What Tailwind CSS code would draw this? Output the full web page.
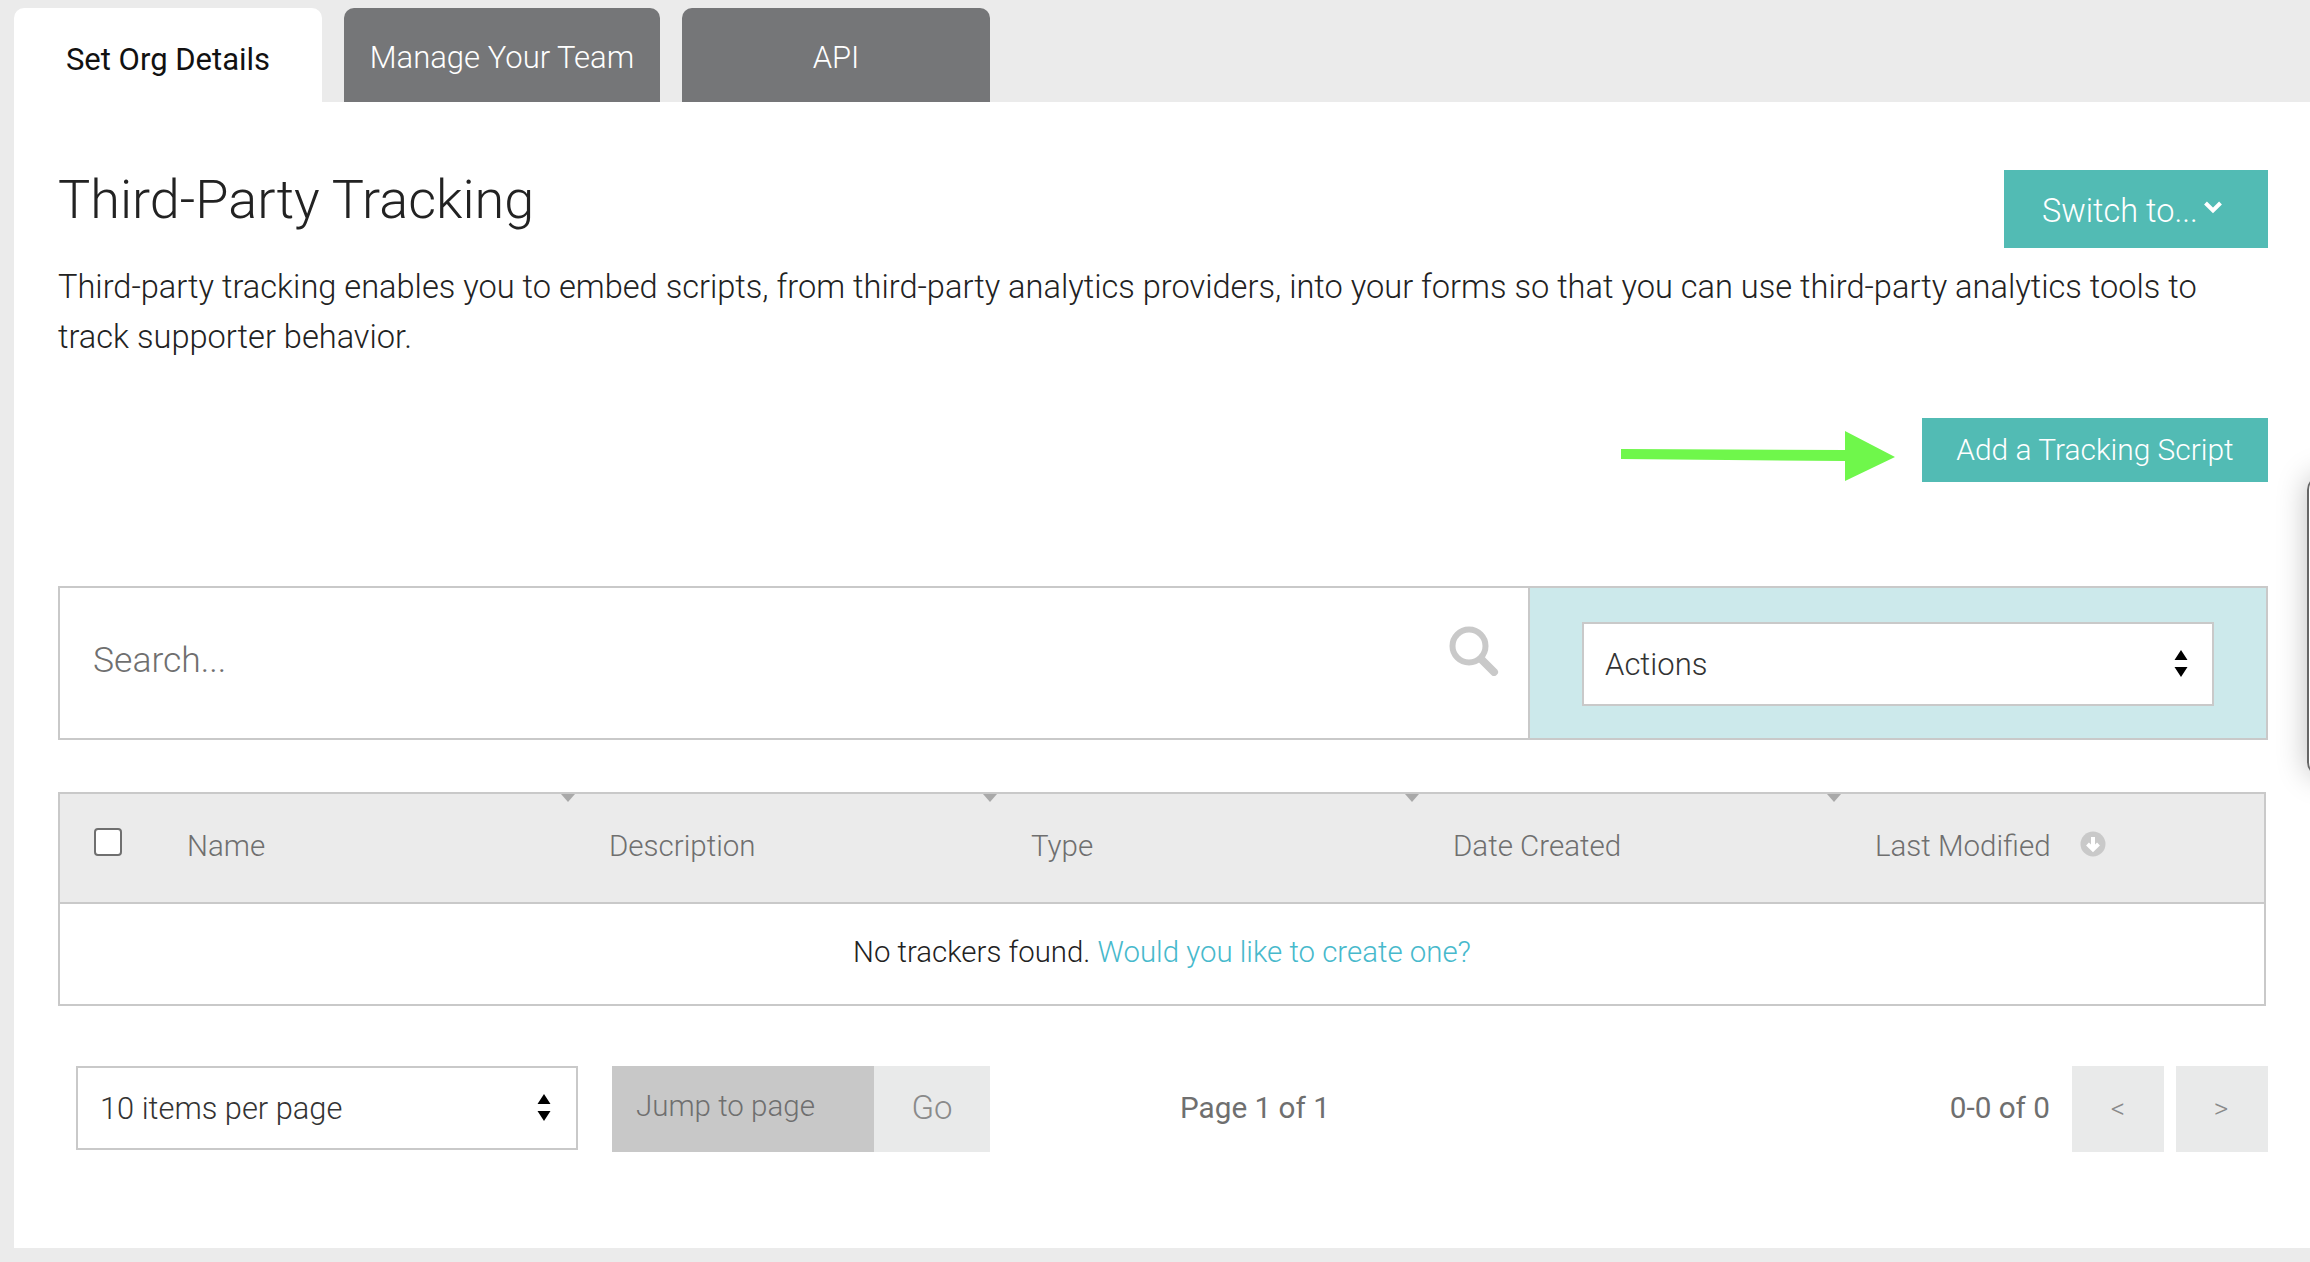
<!DOCTYPE html>
<html><head><meta charset="utf-8"><script src="https://cdn.jsdelivr.net/npm/@tailwindcss/browser@4"></script></head>
<body class="bg-[#ebebeb] font-['Roboto',sans-serif] font-light overflow-hidden">
<div class="relative w-[2310px] h-[1262px] pt-[8px]">
  <div class="flex pl-[14px] h-[94px] gap-[22px]">
    <div class="w-[308px] bg-white rounded-t-[10px] flex justify-center pt-[29px] text-[31px] font-normal text-[#111]">Set Org Details</div>
    <div class="w-[316px] bg-[#757678] rounded-t-[10px] flex justify-center pt-[27px] text-[31px] text-white">Manage Your Team</div>
    <div class="w-[308px] bg-[#757678] rounded-t-[10px] flex justify-center pt-[27px] text-[31px] text-white">API</div>
  </div>
  <div class="ml-[14px] h-[1146px] bg-white pl-[44px] pr-[42px] pt-[68px]">
    <div class="flex justify-between h-[78px]">
      <h1 class="text-[54px] text-[#222] leading-[60px]">Third-Party Tracking</h1>
      <div class="w-[264px] h-[78px] bg-[#52bbb4] text-white text-[32.500px] flex items-center pl-[38px] gap-[5px] pt-[5px]">Switch to...<svg width="20" height="14" viewBox="0 0 20 14" class="mb-[9px]"><path d="M2.500 3l7.500 7.500L17.500 3" fill="none" stroke="#fff" stroke-width="4"/></svg></div>
    </div>
    <p class="mt-[14px] text-[32.600px] leading-[50px] text-[#222] w-[2200px]">Third-party tracking enables you to embed scripts, from third-party analytics providers, into your forms so that you can use third-party analytics tools to track supporter behavior.</p>
    <div class="mt-[56px] flex justify-end items-center h-[64px]">
      <svg width="274" height="50" viewBox="0 0 274 50" class="mr-[27px] mt-[12px]"><path d="M0 18L224 19V0L274 26 224 50V30L0 28Z" fill="#6ff74b"/></svg>
      <div class="w-[346px] h-[64px] bg-[#52bbb4] text-white text-[29.900px] flex items-center justify-center">Add a Tracking Script</div>
    </div>
    <div class="mt-[104px] flex h-[154px] border-2 border-[#c9c9c9]">
      <div class="w-[1470px] flex items-center justify-between pl-[33px] pr-[29px] border-r-2 border-[#c9c9c9] text-[35.500px] text-[#6f6f6f]">
        <span class="pb-[4px]">Search...</span>
        <svg width="50" height="50" viewBox="0 0 50 50" class="mb-[24px]"><circle cx="20" cy="20" r="16.500" fill="none" stroke="#c9c9c9" stroke-width="6"/><path d="M33 34l12 12" stroke="#c9c9c9" stroke-width="8" stroke-linecap="round"/></svg>
      </div>
      <div class="flex-1 bg-[#cce9eb] pl-[52px] pt-[34px]">
        <div class="w-[632px] h-[84px] bg-white border-2 border-[#c9c9c9] flex items-center justify-between pl-[21px] pr-[24px] text-[31px] text-[#333]">
          <span class="pt-[2px]">Actions</span>
          <svg width="14" height="28" viewBox="0 0 14 28"><path d="M7 0l6.500 10H.5zM.5 17h13L7 27z" fill="#000"/></svg>
        </div>
      </div>
    </div>
    <div class="mt-[52px] w-[2208px] border-2 border-[#c9c9c9] h-[214px]">
      <div class="relative h-[110px] bg-[#ebebeb] border-b-2 border-[#c9c9c9] grid grid-cols-[127px_422px_422px_422px_422px_1fr] text-[29.500px] text-[#6f6f6f] pt-[30px]">
        <div class="pl-[34px] pt-[4px]"><span class="block w-[28px] h-[28px] bg-white border-2 border-[#6f6f6f] rounded-[4px]"></span></div>
        <div class="relative">Name<span class="absolute left-[374px] -top-[30px] w-0 h-0 border-x-[7px] border-x-transparent border-t-[8px] border-t-[#a9a9a9]"></span></div>
        <div class="relative">Description<span class="absolute left-[374px] -top-[30px] w-0 h-0 border-x-[7px] border-x-transparent border-t-[8px] border-t-[#a9a9a9]"></span></div>
        <div class="relative">Type<span class="absolute left-[374px] -top-[30px] w-0 h-0 border-x-[7px] border-x-transparent border-t-[8px] border-t-[#a9a9a9]"></span></div>
        <div class="relative">Date Created<span class="absolute left-[374px] -top-[30px] w-0 h-0 border-x-[7px] border-x-transparent border-t-[8px] border-t-[#a9a9a9]"></span></div>
        <div class="flex gap-[29px]"><span>Last Modified</span><svg width="26" height="26" viewBox="0 0 26 26" class="mt-[7px]"><circle cx="13" cy="13" r="12.500" fill="#c9c9c9"/><path d="M13 6v12M7.500 13l5.500 5.500 5.500-5.500" fill="none" stroke="#fff" stroke-width="4"/></svg></div>
      </div>
      <div class="h-[100px] flex items-center justify-center text-[29.400px] text-[#222] pb-[3px]"><span>No trackers found.&nbsp;<span class="text-[#47b9cc]">Would you like to create one?</span></span></div>
    </div>
    <div class="mt-[60px] ml-[18px] flex items-start h-[86px] text-[30.800px]">
      <div class="w-[502px] h-[84px] border-2 border-[#c9c9c9] flex items-center justify-between pl-[22px] pr-[25px] text-[#333]">
        <span class="pt-[3px]">10 items per page</span>
        <svg width="14" height="28" viewBox="0 0 14 28"><path d="M7 0l6.500 10H.5zM.5 17h13L7 27z" fill="#000"/></svg>
      </div>
      <div class="ml-[34px] w-[262px] h-[86px] bg-[#c8c8c8] flex items-center pl-[24px] text-[#6f6f6f] text-[29.500px] pb-[6px]">Jump to page</div>
      <div class="w-[116px] h-[86px] bg-[#e9eaea] flex items-center justify-center text-[#8a8a8a] text-[33px] pb-[2px]">Go</div>
      <div class="ml-[190px] h-[86px] flex items-center text-[29.700px] text-[#6f6f6f] font-normal pb-[2px]">Page 1 of 1</div>
      <div class="ml-auto h-[86px] flex items-center text-[29.700px] text-[#6f6f6f] font-normal mr-[22px] pb-[2px]">0-0 of 0</div>
      <div class="w-[92px] h-[86px] bg-[#e9eaea] flex items-center justify-center text-[#8a8a8a] text-[28px]">&lt;</div>
      <div class="ml-[12px] w-[92px] h-[86px] bg-[#e9eaea] flex items-center justify-center text-[#8a8a8a] text-[28px] pr-[2px]">&gt;</div>
    </div>
  </div>
  <div class="absolute left-[2307px] top-[476px] w-[40px] h-[300px] bg-white border-l-2 border-[#666] rounded-l-[14px] shadow-[0_0_30px_rgba(0,0,0,0.25)]"></div>
</div>
</body></html>
